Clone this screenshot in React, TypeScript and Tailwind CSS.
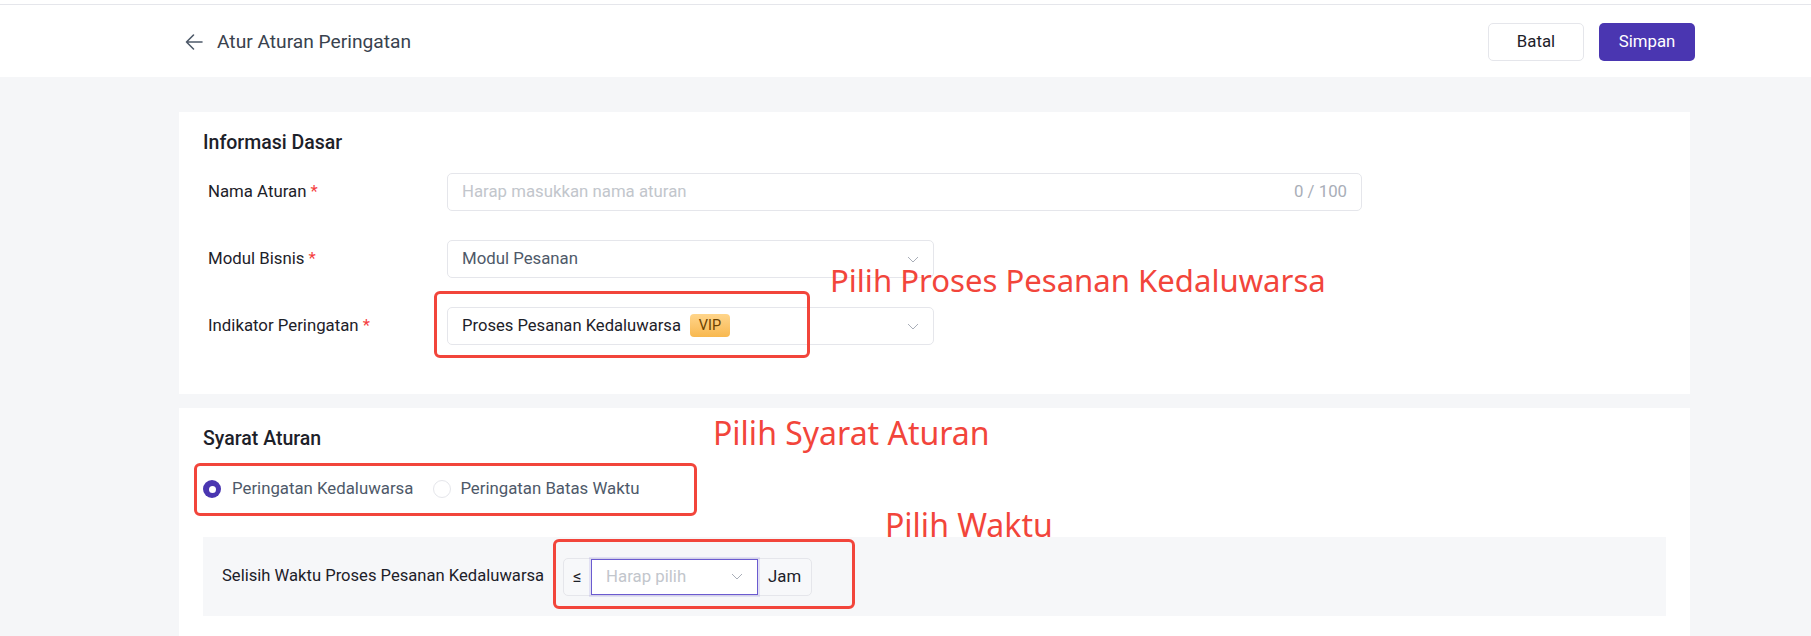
import React from "react";

function Chevron() {
  return (
    <svg width="12" height="7" viewBox="0 0 12 7" fill="none">
      <polyline points="1,1 6,6 11,1" stroke="#a9aeb8" strokeWidth="1" />
    </svg>
  );
}

function BackArrow() {
  return (
    <svg width="18" height="18" viewBox="0 0 18 18" fill="none">
      <path d="M1.5 9H17M8.5 2L1.5 9L8.5 16" stroke="#4e5969" strokeWidth="1.6" strokeLinecap="round" strokeLinejoin="round" />
    </svg>
  );
}

function Row({ label, children }: { label: string; children: React.ReactNode }) {
  return (
    <div className="flex items-center">
      <div className="w-[244px] pl-[5px] text-[16.8px] text-[#1d2129]">
        {label} <span className="text-[#f53f3f]">*</span>
      </div>
      {children}
    </div>
  );
}

export default function App() {
  return (
    <div className="relative min-h-[700px] bg-[#f5f6f8] font-['Roboto',sans-serif] text-[#1d2129]">
      <div className="h-[4px] bg-white" />
      <header className="flex h-[73px] items-center justify-between border-t border-[#e5e6eb] bg-white pl-[185px] pr-[116px] pt-[2px]">
        <div className="flex items-center gap-[14px]">
          <BackArrow />
          <span className="text-[19.2px] text-[#39424e]">Atur Aturan Peringatan</span>
        </div>
        <div className="flex items-center gap-[15px]">
          <button className="h-[38px] w-[96px] rounded-[5px] border border-[#e5e6eb] bg-white text-[16.8px] text-[#1d2129]">
            Batal
          </button>
          <button className="h-[38px] w-[96px] rounded-[5px] bg-[#4a36b1] text-[16.8px] text-white">
            Simpan
          </button>
        </div>
      </header>

      <main className="flex flex-col gap-[14px] pl-[179px] pr-[121px] pt-[35px]">
        <section className="bg-white px-[24px] pb-[49px] pt-[20px]">
          <h2 className="text-[19.5px] font-medium leading-[22px] text-[#1d2129]">Informasi Dasar</h2>
          <div className="mt-[19px] flex flex-col gap-[29px]">
            <Row label="Nama Aturan">
              <div className="flex h-[38px] w-[915px] items-center justify-between rounded-[5px] border border-[#e5e6eb] px-[14px] text-[16.8px]">
                <span className="text-[#c2c6cc]">Harap masukkan nama aturan</span>
                <span className="text-[#a9aeb8]">0 / 100</span>
              </div>
            </Row>
            <Row label="Modul Bisnis">
              <div className="flex h-[38px] w-[487px] items-center justify-between rounded-[5px] border border-[#e5e6eb] pl-[14px] pr-[14px] text-[16.8px]">
                <span className="text-[#4e5969]">Modul Pesanan</span>
                <Chevron />
              </div>
            </Row>
            <Row label="Indikator Peringatan">
              <div className="flex h-[38px] w-[487px] items-center justify-between rounded-[5px] border border-[#e5e6eb] pl-[14px] pr-[14px] text-[16.8px]">
                <div className="flex items-center gap-[9px]">
                  <span className="text-[16.6px] text-[#1d2129]">Proses Pesanan Kedaluwarsa</span>
                  <span className="flex h-[23px] w-[40px] items-center justify-center rounded-[4px] bg-gradient-to-b from-[#ffd58a] to-[#f8b84e] text-[14.5px] text-[#6b4200]">
                    VIP
                  </span>
                </div>
                <Chevron />
              </div>
            </Row>
          </div>
        </section>

        <section className="min-h-[300px] bg-white px-[24px] pt-[20px]">
          <h2 className="text-[19.5px] font-medium leading-[22px] text-[#1d2129]">Syarat Aturan</h2>
          <div className="mt-[28px] flex h-[22px] items-center text-[16.8px] text-[#4e5969]">
            <span className="flex h-[18px] w-[18px] items-center justify-center rounded-full bg-[#4a36b1]">
              <span className="h-[7px] w-[7px] rounded-full bg-white" />
            </span>
            <span className="ml-[11px]">Peringatan Kedaluwarsa</span>
            <span className="ml-[20px] h-[18px] w-[18px] rounded-full border border-[#e5e6eb] bg-white" />
            <span className="ml-[9px]">Peringatan Batas Waktu</span>
          </div>
          <div className="mt-[37px] flex h-[79px] items-center bg-[#f6f7f9] pl-[19px]">
            <span className="text-[16.6px] text-[#1d2129]">Selisih Waktu Proses Pesanan Kedaluwarsa</span>
            <div className="ml-[19px] flex h-[38px] items-stretch rounded-[5px] border border-[#e5e6eb] bg-[#f7f8fa] text-[16.8px]">
              <span className="flex w-[27px] items-center justify-center text-[#1d2129]">≤</span>
              <div className="flex w-[167px] items-center justify-between border border-[#6b5bd0] bg-white pl-[14px] pr-[14px] shadow-[0_0_0_2px_rgba(107,91,208,0.15)]">
                <span className="text-[#c2c6cc]">Harap pilih</span>
                <Chevron />
              </div>
              <span className="flex w-[53px] items-center justify-center text-[#1d2129]">Jam</span>
            </div>
          </div>
        </section>
      </main>

      {/* annotations */}
      <div className="pointer-events-none absolute left-[434px] top-[291px] h-[67px] w-[376px] rounded-[6px] border-[3px] border-[#f2453b]" />
      <div className="pointer-events-none absolute left-[830px] top-[260px] whitespace-nowrap font-['Noto_Sans',sans-serif] text-[31.1px] leading-[40px] text-[#f2453b]">
        Pilih Proses Pesanan Kedaluwarsa
      </div>
      <div className="pointer-events-none absolute left-[194px] top-[463px] h-[53px] w-[503px] rounded-[6px] border-[3px] border-[#f2453b]" />
      <div className="pointer-events-none absolute left-[713px] top-[413px] whitespace-nowrap font-['Noto_Sans',sans-serif] text-[32px] leading-[40px] text-[#f2453b]">
        Pilih Syarat Aturan
      </div>
      <div className="pointer-events-none absolute left-[553px] top-[539px] h-[70px] w-[302px] rounded-[6px] border-[3px] border-[#f2453b]" />
      <div className="pointer-events-none absolute left-[885px] top-[505px] whitespace-nowrap font-['Noto_Sans',sans-serif] text-[32px] leading-[40px] text-[#f2453b]">
        Pilih Waktu
      </div>
    </div>
  );
}
